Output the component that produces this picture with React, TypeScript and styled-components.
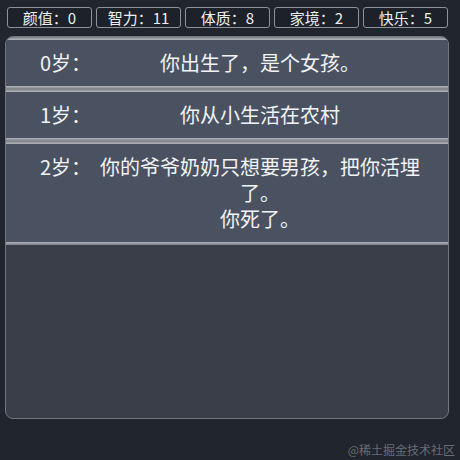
import React from "react";
import styled, { createGlobalStyle } from "styled-components";

const GlobalStyle = createGlobalStyle`
  html, body {
    margin: 0;
    padding: 0;
    background: #21252e;
  }
  body {
    width: 460px;
    height: 460px;
    overflow: hidden;
    font-family: "Noto Sans CJK SC", "Noto Sans", sans-serif;
    color: #f2f3f5;
  }
`;

const Page = styled.div`
  position: relative;
  width: 460px;
  height: 460px;
  padding: 7px 0 0 5px;
  box-sizing: border-box;
`;

const StatBar = styled.div`
  display: flex;
  gap: 4px;
  margin: 0 12px 8px 2px;
`;

const Stat = styled.div`
  flex: 1;
  height: 21px;
  box-sizing: border-box;
  border: 1px solid #8d9198;
  border-radius: 3px;
  background: #1d2129;
  font-size: 15px;
  line-height: 19px;
  text-align: center;
  color: #eef0f2;
`;

const Panel = styled.div`
  width: 444px;
  height: 383px;
  box-sizing: border-box;
  border: 1px solid #72767d;
  border-radius: 8px;
  background: #3a3e48;
  overflow: hidden;
`;

/* each row carries a bevelled 3px edge top and bottom, so two rows meet in a ridge */
const Item = styled.div`
  display: flex;
  align-items: flex-start;
  padding: 13px 23px 13px 34px;
  background:
    linear-gradient(#7b7f86, #b3b7bc) top / 100% 3px no-repeat,
    linear-gradient(#b3b7bc, #7b7f86) bottom / 100% 3px no-repeat,
    #4a5262;
  font-size: 20px;
  line-height: 26px;
`;

const Age = styled.div`
  width: 55px;
  flex-shrink: 0;
`;

const Text = styled.div`
  width: 330px;
  text-align: center;
`;

const Watermark = styled.div`
  position: absolute;
  right: 5px;
  bottom: 2px;
  font-size: 12px;
  color: #696c74;
  font-family: "Noto Sans CJK SC", sans-serif;
`;

const stats = [
  ["颜值", 0],
  ["智力", 11],
  ["体质", 8],
  ["家境", 2],
  ["快乐", 5],
];

const events = [
  { age: 0, lines: ["你出生了，是个女孩。"] },
  { age: 1, lines: ["你从小生活在农村"] },
  { age: 2, lines: ["你的爷爷奶奶只想要男孩，把你活埋了。", "你死了。"] },
];

export default function App() {
  return (
    <Page>
      <GlobalStyle />
      <StatBar>
        {stats.map(([name, value]) => (
          <Stat key={name}>
            {name}：{value}
          </Stat>
        ))}
      </StatBar>
      <Panel>
        {events.map((e) => (
          <Item key={e.age}>
            <Age>{e.age}岁：</Age>
            <Text>
              {e.lines.map((l) => (
                <div key={l}>{l}</div>
              ))}
            </Text>
          </Item>
        ))}
      </Panel>
      <Watermark>@稀土掘金技术社区</Watermark>
    </Page>
  );
}
